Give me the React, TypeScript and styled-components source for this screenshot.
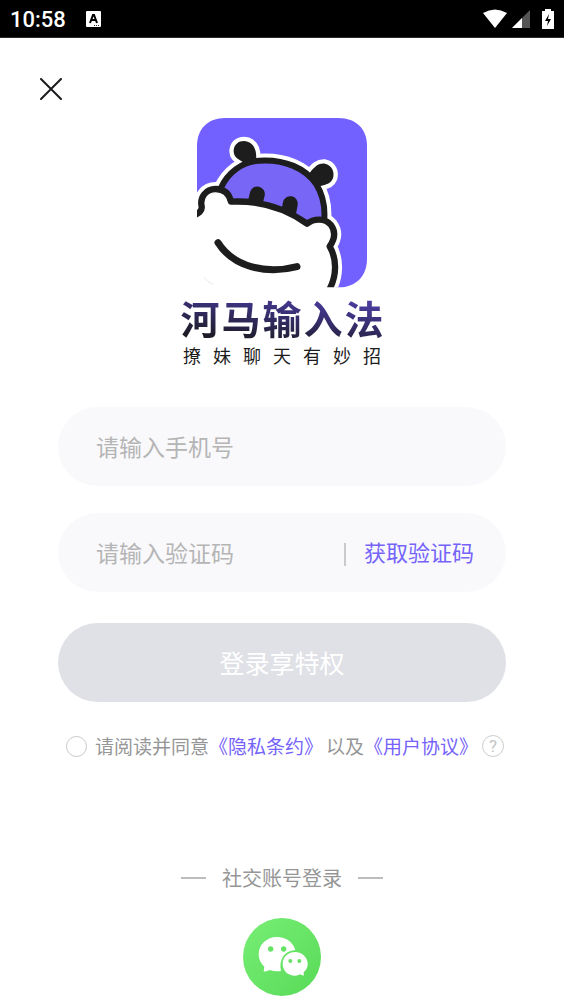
import React, { useState } from "react";
import styled, { createGlobalStyle } from "styled-components";

const PURPLE = "#7563fa";

const GlobalStyle = createGlobalStyle`
  * { box-sizing: border-box; }
  body {
    margin: 0;
    background: #fff;
    font-family: "Noto Sans CJK SC", "Noto Sans", sans-serif;
  }
  button, input { font: inherit; }
`;

const StatusBar = styled.div`
  display: flex;
  align-items: center;
  height: 38px;
  padding: 0 10px;
  background: #000;
  border-bottom: 1px solid #2c2c2c;
  color: #fff;
`;

const Clock = styled.time`
  padding-top: 2px;
  font: 500 22px/36px Roboto, sans-serif;
  margin-right: 20px;
`;

const StatusIcons = styled.div`
  display: flex;
  align-items: center;
  margin-left: auto;
`;

const StatusGlyph = styled.svg<{ $gap?: number }>`
  display: block;
  flex: none;
  margin-left: ${(p) => p.$gap ?? 0}px;
`;

const CloseButton = styled.button`
  display: block;
  margin: 36px 0 0 36px;
  padding: 4px;
  border: 0;
  background: none;
  line-height: 0;
  cursor: pointer;
`;

const Brand = styled.header`
  display: flex;
  flex-direction: column;
  align-items: center;
  margin-top: 14px;
`;

const Title = styled.h1`
  margin: 5px 0 0;
  padding-left: 2px;
  font-size: 39px;
  line-height: 48px;
  font-weight: 700;
  letter-spacing: 2px;
  color: transparent;
  background: linear-gradient(187deg, #4a3c9c 18%, #3a3178 42%, #1c1b26 88%);
  background-clip: text;
  -webkit-background-clip: text;
`;

const Slogan = styled.p`
  margin: 3px 0 0;
  padding-left: 12px;
  font-size: 18px;
  line-height: 22px;
  letter-spacing: 12px;
  color: #1c1c1c;
`;

const Form = styled.form`
  display: flex;
  flex-direction: column;
  margin: 41px 58px 0;
`;

const Field = styled.div`
  display: flex;
  align-items: center;
  height: 79px;
  margin-bottom: 27px;
  padding: 0 32px 0 38px;
  border-radius: 40px;
  background: #f9f9fc;
`;

const TextInput = styled.input`
  flex: 1;
  min-width: 0;
  padding: 0 0 2px;
  border: 0;
  outline: 0;
  background: none;
  font-size: 23px;
  line-height: 34px;
  color: #333;
  &::placeholder { color: #b5b5b5; opacity: 1; }
`;

const CodeButton = styled.button`
  display: flex;
  align-items: center;
  gap: 18px;
  padding: 0 0 3px;
  border: 0;
  background: none;
  font-size: 22px;
  line-height: 32px;
  color: ${PURPLE};
  cursor: pointer;
  &::before {
    content: "";
    width: 2px;
    height: 23px;
    margin-top: 6px;
    background: #cacacc;
  }
`;

const LoginButton = styled.button`
  height: 79px;
  margin-top: 4px;
  padding: 0 0 2px;
  border: 0;
  border-radius: 40px;
  background: #e0e1e6;
  font-size: 25px;
  color: #fff;
`;

const Agreement = styled.div`
  display: flex;
  align-items: center;
  justify-content: center;
  margin-top: 30px;
  padding-left: 6px;
  font-size: 19px;
  line-height: 28px;
  color: #969696;
  white-space: nowrap;
`;

const Consent = styled.input`
  appearance: none;
  flex: none;
  width: 21px;
  height: 21px;
  margin: 0 8px 0 0;
  border: 1px solid #c8c8c8;
  border-radius: 50%;
  &:checked { background: ${PURPLE}; border-color: ${PURPLE}; }
`;

const PolicyLink = styled.a`
  color: ${PURPLE};
  text-decoration: none;
`;

const Joiner = styled.span`
  margin-left: 3px;
`;

const HelpButton = styled.button`
  flex: none;
  width: 22px;
  height: 22px;
  margin-left: 4px;
  padding: 0;
  border: 1px solid #cdcdcd;
  border-radius: 50%;
  background: none;
  font: 400 17px/20px Roboto, sans-serif;
  color: #c4c4c4;
`;

const Social = styled.section`
  display: flex;
  flex-direction: column;
  align-items: center;
  margin-top: 103px;
  padding-bottom: 8px;
`;

const SocialTitle = styled.h2`
  display: flex;
  align-items: center;
  gap: 16px;
  margin: 0;
  font-size: 20px;
  line-height: 30px;
  font-weight: 400;
  color: #969696;
  &::before, &::after {
    content: "";
    width: 25px;
    height: 2px;
    background: #bdbdbd;
  }
`;

const WeChatButton = styled.button`
  margin-top: 25px;
  padding: 0;
  border: 0;
  border-radius: 50%;
  background: none;
  line-height: 0;
  cursor: pointer;
`;

function HippoLogo() {
  const head =
    "M108 232 C128 188 170 154 222 151 C300 146 362 174 394 222 C414 254 420 288 418 324";
  const muzzle =
    "M22 318 C42 308 52 302 50 288 C44 262 62 236 92 236 C116 236 132 248 138 274 C224 270 302 294 366 340 C386 324 420 322 438 344 C454 366 448 388 434 408 C456 446 456 496 432 540";
  const leftEar =
    "M178 162 C174 148 144 148 146 120 C148 98 168 88 188 94 C210 102 216 124 213 154 Z";
  const rightEar =
    "M372 190 C386 174 396 158 420 160 C440 164 450 184 444 204 C436 226 414 222 402 230 Z";
  return (
    <svg width="170" height="170" viewBox="36 23 510 510" role="img" aria-label="河马输入法">
      <defs>
        <clipPath id="tile">
          <path d="M36 23 H546 V531 H36 Z" />
        </clipPath>
      </defs>
      <path
        d="M36 308 V107 C36 56 68 23 120 23 H460 C514 23 546 56 546 107 V445 C546 496 514 531 460 531 H452 Z"
        fill="#7260ff"
      />
      <g clipPath="url(#tile)">
        <g fill="#fff" stroke="#fff" strokeWidth="26" strokeLinejoin="round">
          <path d={leftEar} />
          <path d={rightEar} />
        </g>
        <g fill="none" stroke="#fff" strokeWidth="42" strokeLinejoin="round">
          <path d={head} />
          <path d={muzzle} />
        </g>
        <path d={head + " L366 340 L138 274 Z"} fill="#7867f6" />
        <g fill="none" stroke="#1d1d1d" strokeWidth="45" strokeLinecap="round">
          <path d="M217 251 L211 276" />
          <path d="M316 280 L311 306" />
        </g>
        <path d={head} fill="none" stroke="#1d1d1d" strokeWidth="18" />
        <path d={leftEar} fill="#1d1d1d" />
        <path d={rightEar} fill="#1d1d1d" />
        <path d={muzzle + " H22 Z"} fill="#fff" />
        <path d={muzzle} fill="none" stroke="#1d1d1d" strokeWidth="19" strokeLinejoin="round" />
        <path
          d="M99 397 C144 468 240 494 336 469"
          fill="none"
          stroke="#1d1d1d"
          strokeWidth="21"
          strokeLinecap="round"
        />
        <path d="M56 500 Q68 516 84 522" fill="none" stroke="#ddd" strokeWidth="2" />
      </g>
    </svg>
  );
}

function WeChatLogo() {
  return (
    <svg width="78" height="78" viewBox="219 189 234 234" aria-hidden="true">
      <defs>
        <linearGradient id="leaf" x1="0" y1="0" x2="1" y2="1">
          <stop offset="0.1" stopColor="#74ec72" />
          <stop offset="0.9" stopColor="#5cdc5b" />
        </linearGradient>
      </defs>
      <circle cx="336" cy="306" r="117" fill="url(#leaf)" />
      <path
        d="M321 246 C290 246 266 269 266 298 C266 313 272 325 283 335 L281 349 Q283 351 299 345 Q315 350 333 348 C326 314 342 288 376 285 C370 262 347 246 321 246 Z"
        fill="#fff"
      />
      <path
        d="M375 291 C354 291 338 307 338 326 C338 347 354 362 375 362 Q384 362 390 358 L400 362 Q402 361 401 352 C409 345 413 337 413 326 C413 307 396 291 375 291 Z"
        fill="#fff"
      />
      <g fill="#66e365">
        <circle cx="302" cy="282" r="8" />
        <circle cx="341" cy="282" r="8" />
        <circle cx="361" cy="318" r="6" />
        <circle cx="388" cy="318" r="6" />
      </g>
    </svg>
  );
}

export default function App() {
  const [agreed, setAgreed] = useState(false);
  return (
    <>
      <GlobalStyle />
      <StatusBar>
        <Clock>10:58</Clock>
        <StatusGlyph width="15" height="16" viewBox="0 0 15 16">
          <rect width="15" height="16" rx="1" fill="#fff" />
          <path
            d="M4 12 L7 4 H8 L11 12 M5 9 H10"
            fill="none"
            stroke="#000"
            strokeWidth="2"
          />
          <path d="M8 14.500 H14" stroke="#333" strokeWidth="1" strokeDasharray="1 1" />
        </StatusGlyph>
        <StatusIcons>
          <StatusGlyph width="24" height="20" viewBox="0 0 24 20">
            <path d="M0 4 Q12 -3 24 4 L12 19 Z" fill="#fff" />
          </StatusGlyph>
          <StatusGlyph $gap={5} width="18" height="18" viewBox="0 0 18 18">
            <path d="M18 0 V18 H0 Z" fill="#555" />
            <path d="M10 8 V18 H0 Z" fill="#fff" />
          </StatusGlyph>
          <StatusGlyph $gap={12} width="12" height="20" viewBox="0 0 12 20">
            <path d="M3 0 H9 V2 H12 V20 H0 V2 H3 Z" fill="#fff" />
            <path d="M7 5 L3 12 H6 L5 17 L9 10 H6 Z" fill="#000" />
          </StatusGlyph>
        </StatusIcons>
      </StatusBar>
      <main>
        <CloseButton type="button" aria-label="关闭">
          <svg width="22" height="22" viewBox="0 0 22 22">
            <path
              d="M1 1 L21 21 M21 1 L1 21"
              stroke="#1b1b1f"
              strokeWidth="2"
              strokeLinecap="round"
            />
          </svg>
        </CloseButton>
        <Brand>
          <HippoLogo />
          <Title>河马输入法</Title>
          <Slogan>撩妹聊天有妙招</Slogan>
        </Brand>
        <Form onSubmit={(e) => e.preventDefault()}>
          <Field>
            <TextInput type="tel" aria-label="手机号" placeholder="请输入手机号" />
          </Field>
          <Field>
            <TextInput inputMode="numeric" aria-label="验证码" placeholder="请输入验证码" />
            <CodeButton type="button">获取验证码</CodeButton>
          </Field>
          <LoginButton type="submit">登录享特权</LoginButton>
        </Form>
        <Agreement>
          <Consent
            id="consent"
            type="checkbox"
            checked={agreed}
            onChange={(e) => setAgreed(e.target.checked)}
          />
          <label htmlFor="consent">请阅读并同意</label>
          <PolicyLink href="#privacy">《隐私条约》</PolicyLink>
          <Joiner>以及</Joiner>
          <PolicyLink href="#terms">《用户协议》</PolicyLink>
          <HelpButton type="button" aria-label="帮助">?</HelpButton>
        </Agreement>
        <Social>
          <SocialTitle>社交账号登录</SocialTitle>
          <WeChatButton type="button" aria-label="微信登录">
            <WeChatLogo />
          </WeChatButton>
        </Social>
      </main>
    </>
  );
}
